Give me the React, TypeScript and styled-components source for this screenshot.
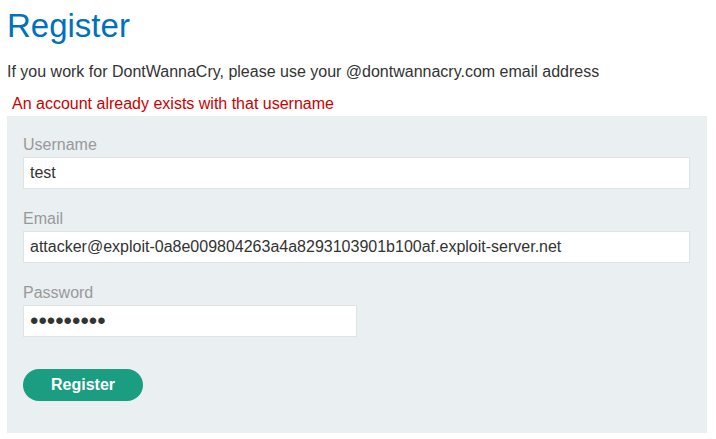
import React from "react";
import styled, { createGlobalStyle } from "styled-components";

const GlobalStyle = createGlobalStyle`
  html, body {
    margin: 0;
    padding: 0;
    background: #ffffff;
  }
  body {
    font-family: "Liberation Sans", Arial, sans-serif;
    font-size: 16px;
    color: #333333;
  }
`;

const Page = styled.div`
  padding: 7px 9px 0 7px;
`;

const Title = styled.h1`
  margin: 0;
  font-size: 33px;
  font-weight: normal;
  color: #0071bc;
  line-height: 38px;
`;

const Intro = styled.p`
  margin: 18px 0 0 0;
  font-size: 16px;
  line-height: 18px;
  color: #333333;
`;

const Warning = styled.p`
  margin: 14px 0 0 5px;
  font-size: 16px;
  line-height: 18px;
  color: #cc0000;
`;

const Form = styled.form`
  display: flex;
  flex-direction: column;
  width: 700px;
  box-sizing: border-box;
  margin-top: 3px;
  padding: 17px 17px 32px 16px;
  background: #eaeff2;
`;

const Field = styled.div`
  display: flex;
  flex-direction: column;
  gap: 3px;
  margin-bottom: 18px;
`;

const Label = styled.label`
  display: block;
  margin-top: 3px;
  font-size: 16px;
  line-height: 18px;
  color: #999999;
`;

const Input = styled.input<{ $half?: boolean; $secret?: boolean }>`
  box-sizing: border-box;
  width: ${(p) => (p.$half ? "50%" : "100%")};
  height: 32px;
  margin: 0;
  padding: 0 6px;
  border: 1px solid #e0e3e5;
  border-radius: 0;
  background: #ffffff;
  font-family: "Liberation Sans", Arial, sans-serif;
  font-size: ${(p) => (p.$secret ? "24px" : "16px")};
  color: #333333;
  outline: none;
`;

const Button = styled.button`
  align-self: flex-start;
  margin-top: 14px;
  height: 32px;
  padding: 0 28px;
  border: none;
  border-radius: 16px;
  background: #1a9d80;
  color: #ffffff;
  font-family: "Liberation Sans", Arial, sans-serif;
  font-size: 16px;
  font-weight: bold;
  cursor: pointer;
`;

export default function App() {
  return (
    <>
      <GlobalStyle />
      <Page>
        <Title>Register</Title>
        <Intro>
          If you work for DontWannaCry, please use your @dontwannacry.com email address
        </Intro>
        <Warning>An account already exists with that username</Warning>
        <Form onSubmit={(e) => e.preventDefault()}>
          <Field>
            <Label htmlFor="username">Username</Label>
            <Input id="username" type="text" value="test" readOnly />
          </Field>
          <Field>
            <Label htmlFor="email">Email</Label>
            <Input
              id="email"
              type="text"
              value="attacker@exploit-0a8e009804263a4a8293103901b100af.exploit-server.net"
              readOnly
            />
          </Field>
          <Field>
            <Label htmlFor="password">Password</Label>
            <Input id="password" type="password" value="123456789" readOnly $half $secret />
          </Field>
          <Button type="submit">Register</Button>
        </Form>
      </Page>
    </>
  );
}
